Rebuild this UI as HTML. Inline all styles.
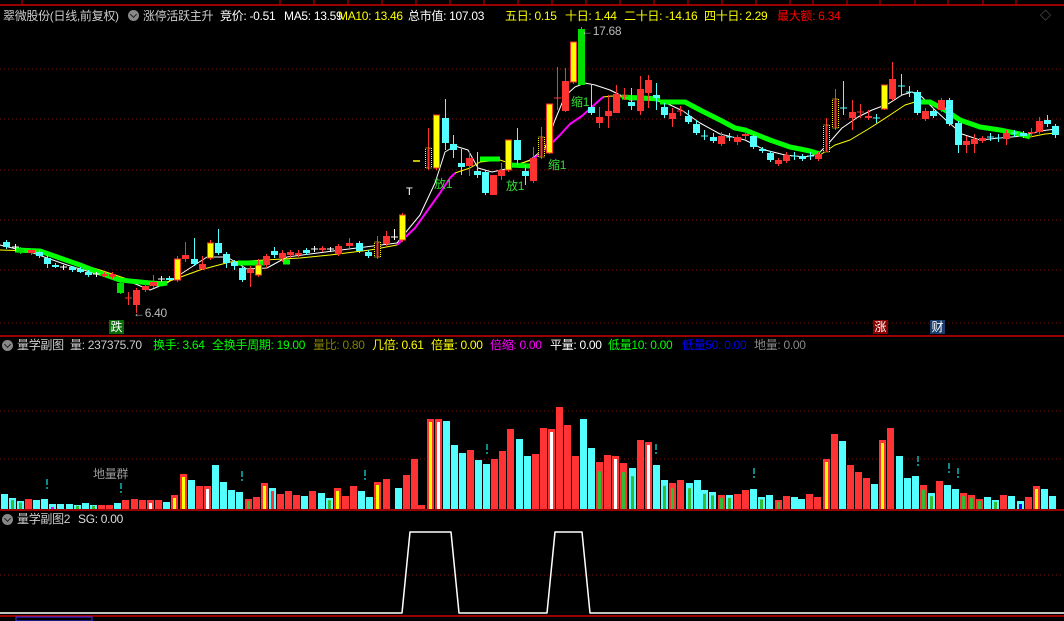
<!DOCTYPE html>
<html><head><meta charset="utf-8"><style>
html,body{margin:0;padding:0;background:#000;width:1064px;height:621px;overflow:hidden;font-family:"Liberation Sans","Noto Sans CJK SC",sans-serif}
.t{position:absolute;font-size:12px;letter-spacing:-0.3px;white-space:nowrap;line-height:14px}
.ic{position:absolute;width:11px;height:11px;border-radius:50%;background:#888}
.ic:after{content:"";position:absolute;left:3px;top:2px;width:4px;height:4px;border-right:1.5px solid #222;border-bottom:1.5px solid #222;transform:rotate(45deg)}
.lb{position:absolute;font-size:12px;line-height:14px;width:15px;height:14px;text-align:center}
</style></head><body>
<svg id="s" width="1064" height="621" style="position:absolute;left:0;top:0"></svg>
<div class="t" style="left:3px;top:9px;color:#ccc">翠微股份(日线,前复权)</div>
<div class="ic" style="left:128px;top:10px"></div>
<div class="t" style="left:143px;top:9px;color:#ccc">涨停活跃主升</div>
<div class="t" style="left:220px;top:9px;color:#fff">竞价: -0.51</div>
<div class="t" style="left:284px;top:9px;color:#fff">MA5: 13.59</div>
<div class="t" style="left:338px;top:9px;color:#ff0">MA10: 13.46</div>
<div class="t" style="left:408px;top:9px;color:#fff">总市值: 107.03</div>
<div class="t" style="left:505px;top:9px;color:#ff0">五日: 0.15</div>
<div class="t" style="left:565px;top:9px;color:#ff0">十日: 1.44</div>
<div class="t" style="left:624px;top:9px;color:#ff0">二十日: -14.16</div>
<div class="t" style="left:704px;top:9px;color:#ff0">四十日: 2.29</div>
<div class="t" style="left:777px;top:9px;color:#f00">最大额: 6.34</div>
<div class="t" style="left:1040px;top:9px;color:#777;font-size:11px">◇</div>

<div class="ic" style="left:2px;top:340px"></div>
<div class="t" style="left:17px;top:338px;color:#ccc">量学副图</div>
<div class="t" style="left:70px;top:338px;color:#ccc">量: 237375.70</div>
<div class="t" style="left:153px;top:338px;color:#0f0">换手: 3.64</div>
<div class="t" style="left:212px;top:338px;color:#0f0">全换手周期: 19.00</div>
<div class="t" style="left:313px;top:338px;color:#808000">量比: 0.80</div>
<div class="t" style="left:372px;top:338px;color:#ff0">几倍: 0.61</div>
<div class="t" style="left:431px;top:338px;color:#ff0">倍量: 0.00</div>
<div class="t" style="left:490px;top:338px;color:#f0f">倍缩: 0.00</div>
<div class="t" style="left:550px;top:338px;color:#fff">平量: 0.00</div>
<div class="t" style="left:608px;top:338px;color:#0f0">低量10: 0.00</div>
<div class="t" style="left:682px;top:338px;color:#00f">低量50: 0.00</div>
<div class="t" style="left:754px;top:338px;color:#888">地量: 0.00</div>

<div class="ic" style="left:2px;top:514px"></div>
<div class="t" style="left:17px;top:512px;color:#ccc">量学副图2</div>
<div class="t" style="left:78px;top:512px;color:#ddd">SG: 0.00</div>

<div class="t" style="left:93px;top:467px;color:#999">地量群</div>
<div class="lb" style="left:109px;top:320px;background:#0a6b0a;color:#fff">跌</div>
<div class="lb" style="left:873px;top:320px;background:#8b0000;color:#fff">涨</div>
<div class="lb" style="left:930px;top:320px;background:#1a3d6b;color:#fff">财</div>
<div class="t" style="left:133px;top:306px;color:#bbb">←6.40</div>
<div class="t" style="left:581px;top:24px;color:#bbb">←17.68</div>
<div class="t" style="left:434px;top:177px;color:#3d3">放1</div>
<div class="t" style="left:506px;top:179px;color:#3d3">放1</div>
<div class="t" style="left:571px;top:95px;color:#3d3">缩1</div>
<div class="t" style="left:548px;top:158px;color:#3d3">缩1</div>
<div class="t" style="left:406px;top:185px;color:#fff;font-size:11px">T</div>
<script>
var s=document.getElementById('s'),h='';
function L(x1,y1,x2,y2,c,w,d){h+='<line x1="'+x1+'" y1="'+y1+'" x2="'+x2+'" y2="'+y2+'" stroke="'+c+'" stroke-width="'+(w||1)+'"'+(d?' stroke-dasharray="'+d+'"':'')+'/>';}
function R(x,y,w,hh,f,st){h+='<rect x="'+x+'" y="'+y+'" width="'+w+'" height="'+hh+'" fill="'+f+'"'+(st?' stroke="'+st+'"':'')+'/>';}
function P(pts,c,w){h+='<polyline fill="none" stroke="'+c+'" stroke-width="'+w+'" stroke-linejoin="round" points="'+pts.map(function(p){return p.join(',')}).join(' ')+'"/>';}
L(0,5,1064,5,'#c00',1.5);L(22,0,22,5,'#c00');
[280,314,348,382,416,450,484,518,552,586,620,654,688,722,756,790,813,847,880,915,948,983,1016].forEach(function(x){L(x,0,x,5,'#c00')});
[69,119,170,220,270,323].forEach(function(y){L(0,y,1064,y,'#7a1010',1,'1 3')});
[411,459].forEach(function(y){L(0,y,1064,y,'#7a1010',1,'1 3')});
L(0,575,1064,575,'#7a1010',1,'1 3');
L(0,336,1064,336,'#c00',1.5);L(0,510,1064,510,'#c00',1.5);L(0,616,1064,616,'#c00',1.5);
var C=[[3,242,247,240,249,'c'],[12,247,248,244,251,'p'],[17,249,252,247,254,'g'],[28,250,253,248,255,'r'],[36,252,256,250,258,'c'],[44,258,264,255,268,'c'],[52,265,267,263,268,'c'],[60,267,268,265,270,'p'],[69,267,270,266,272,'c'],[77,269,272,267,273,'c'],[85,272,275,270,277,'c'],[93,274,275,272,277,'p'],[101,274,276,272,277,'r'],[109,274,277,272,279,'r'],[117,283,293,282,294,'g'],[125,298,299,292,305,'q'],[133,290,305,288,313,'r'],[142,286,290,283,292,'r'],[150,282,286,275,288,'r'],[158,279,280,276,282,'p'],[166,278,280,276,282,'c'],[174,259,280,256,282,'y'],[182,255,259,242,262,'r'],[191,259,264,238,266,'c'],[199,264,269,256,270,'r'],[207,243,258,240,260,'y'],[215,243,253,229,255,'c'],[223,254,263,252,268,'c'],[231,262,266,260,270,'c'],[239,268,280,267,282,'c'],[247,269,273,266,287,'r'],[255,265,275,259,277,'y'],[263,256,265,254,268,'r'],[271,251,255,247,258,'c'],[279,253,258,250,262,'r'],[287,252,255,250,258,'r'],[295,253,255,250,257,'r'],[303,250,253,248,255,'c'],[311,249,250,246,252,'p'],[319,248,250,246,252,'r'],[327,249,250,247,252,'p'],[335,246,254,244,256,'r'],[346,243,246,238,248,'r'],[356,243,251,241,253,'c'],[365,252,256,250,258,'c'],[374,242,257,236,259,'d'],[383,236,244,231,246,'r'],[391,237,239,229,240,'p'],[399,215,240,213,242,'y'],
[416,161,162,161,162,'yd'],[425,148,168,128,170,'d'],[433,115,168,115,170,'y'],[442,118,143,99,150,'c'],[450,144,150,135,158,'c'],[458,163,167,149,175,'c'],[466,158,166,152,176,'r'],[474,171,175,152,178,'c'],[482,172,193,170,195,'c'],[490,175,195,175,195,'r'],[498,170,176,163,180,'r'],[505,140,170,140,172,'y'],[514,140,160,128,165,'c'],[522,171,176,165,185,'c'],[530,158,181,147,183,'r'],[538,137,157,127,159,'d'],[546,104,153,104,154,'y'],[554,98,99,67,110,'q'],[562,81,111,68,112,'r'],[570,42,82,42,84,'y'],[578,29,85,27,85,'g'],[588,107,113,84,115,'c'],[596,117,123,107,128,'r'],[605,111,116,95,128,'r'],[613,94,113,85,113,'r'],[621,96,97,88,100,'q'],[628,102,106,88,110,'c'],[637,89,111,76,115,'r'],[645,80,93,75,108,'r'],[653,95,98,83,110,'c'],[661,107,115,103,118,'c'],[669,113,119,108,127,'r'],[677,111,112,106,116,'q'],[685,116,122,110,124,'c'],[693,124,133,120,135,'c'],[701,136,137,130,140,'o'],[710,137,141,133,143,'c'],[718,136,144,132,146,'r'],[726,137,138,133,141,'o'],[734,137,142,135,145,'r'],[742,134,136,131,140,'r'],[750,136,147,134,149,'c'],[759,149,151,147,153,'c'],[767,153,160,151,162,'c'],[775,160,164,158,166,'r'],[783,155,161,152,163,'r'],[791,156,157,152,160,'o'],[799,156,159,154,161,'c'],[807,156,157,152,160,'o'],[815,154,159,152,161,'r'],[823,125,152,118,152,'d'],[832,99,128,89,130,'d'],[840,108,109,81,115,'o'],[849,112,118,100,130,'r'],[857,112,113,104,118,'q'],[865,116,118,110,120,'r'],[873,118,119,114,123,'o'],[881,85,109,85,110,'y'],[889,79,99,62,101,'r'],[898,86,87,74,95,'o'],[906,92,93,86,97,'o'],[914,92,113,90,115,'c'],[922,111,119,108,121,'r'],[930,111,116,108,118,'c'],[938,100,110,98,112,'r'],[946,100,124,98,126,'c'],[955,123,145,121,153,'c'],[963,141,145,136,153,'r'],[971,139,144,134,153,'r'],[979,138,141,136,143,'r'],[987,137,138,133,141,'o'],[995,138,139,134,142,'o'],[1003,133,139,130,145,'r'],[1011,133,134,130,137,'o'],[1020,133,136,131,138,'c'],[1028,132,133,128,137,'r'],[1036,121,132,117,134,'r'],[1044,120,124,115,127,'c'],[1052,126,135,124,138,'c']];
P([[0,245],[33,253],[67,265],[100,275],[133,283],[150,290],[167,283],[187,270],[207,257],[227,257],[247,269],[267,268],[287,257],[333,251],[397,243],[420,215],[435,183],[445,152],[455,146],[468,150],[478,168],[492,172],[510,168],[530,160],[545,148],[555,120],[565,96],[575,87],[585,83],[595,85],[610,90],[630,100],[650,99],[668,104],[683,111],[700,123],[720,134],[745,140],[765,150],[785,155],[805,157],[818,154],[828,144],[842,128],[858,117],[872,110],[888,104],[902,95],[912,92],[922,97],[935,110],[947,121],[962,134],[980,140],[1000,138],[1022,136],[1040,131],[1056,129]],'#fff',1);
P([[0,250],[33,251],[60,258],[100,270],[130,280],[167,282],[200,270],[230,262],[300,258],[330,255],[370,250],[397,245]],'#ff0',1);
P([[397,245],[415,228],[430,207],[440,193],[450,178],[455,173]],'#f0f',2);
P([[455,173],[470,168],[480,162],[500,160],[515,165],[532,160]],'#ff0',1);
P([[532,160],[548,147],[560,135],[570,124],[582,116],[603,97]],'#f0f',2);
P([[603,97],[612,96],[622,97]],'#ff0',1);
P([[820,155],[835,145],[850,140],[870,128],[890,115],[905,105],[915,102]],'#ff0',1);
P([[1030,137],[1045,134],[1056,133]],'#ff0',1);
var G=[[[15,250],[40,251],[60,258],[80,265],[100,273],[120,280],[140,282],[160,284],[167,283]],[[238,263],[265,263]],[[283,262],[290,262]],[[480,159],[500,159]],[[510,165],[530,166]],[[622,97],[660,99]],[[660,102],[685,102],[700,110],[720,120],[735,128],[745,130],[770,140],[790,147],[810,151],[820,154]],[[915,102],[930,102],[945,110],[960,120],[980,127],[1000,130],[1020,134],[1030,137]]];
G.forEach(function(g){P(g,'#0f0',5)});
C.forEach(function(c){var x=c[0],t=c[1],b=c[2],hi=c[3],lo=c[4],k=c[5],w=7,cx=x+3.5;
 var col={r:'#ff3232',c:'#54ffff',g:'#00e000',y:'#ff3232',d:'#ff3232',p:'#fff',q:'#ff3232',o:'#54ffff',yd:'#ff0'}[k];
 if(k=='yd'){L(x-3,t,x+4,t,'#ff0',1.5);return;}
 L(cx,hi,cx,lo,col,1);
 if(k=='p'||k=='q'||k=='o'){L(x,t,x+w,t,col,1);return;}
 if(k=='y'){R(x+.5,t,w-1,Math.max(b-t,1),'#ff0','#ff3232');return;}
 if(k=='d'){h+='<rect x="'+(x+.5)+'" y="'+t+'" width="'+(w-1)+'" height="'+(b-t)+'" fill="#000" stroke="#ff0" stroke-dasharray="1 1"/>';L(cx,t,cx,b,'#ff3232',2);return;}
 R(x,t,w,Math.max(b-t,1.5),col);
});
var V=[[1,15,'c'],[9,11,'cg'],[17,8,'cg'],[25,10,'r'],[33,9,'c'],[41,10,'c'],[49,5,'cm'],[57,5,'c'],[66,5,'c'],[74,4,'cg'],[82,6,'c'],[90,4,'cg'],[98,4,'r'],[106,4,'r'],[114,6,'c'],[122,9,'r'],[131,10,'r'],[139,9,'r'],[147,9,'rw'],[155,9,'r'],[163,7,'c'],[171,14,'ry'],[180,35,'ry'],[188,29,'c'],[196,23,'r'],[204,23,'rw'],[212,44,'c'],[220,27,'c'],[228,19,'c'],[236,17,'c'],[245,10,'rg'],[253,12,'r'],[261,26,'ry'],[269,21,'cr'],[277,15,'r'],[285,18,'r'],[293,14,'r'],[301,13,'c'],[309,18,'r'],[318,16,'c'],[326,11,'cg'],[334,21,'ry'],[342,13,'r'],[350,23,'r'],[358,18,'c'],[366,12,'c'],[374,27,'ry'],[383,30,'r'],[395,21,'c'],[403,34,'r'],[411,50,'r'],[418,4,'r'],[427,90,'ry'],[435,90,'rw'],[443,88,'c'],[451,64,'c'],[459,56,'c'],[467,59,'r'],[475,49,'c'],[483,45,'c'],[491,50,'r'],[499,58,'r'],[507,80,'r'],[516,70,'c'],[524,53,'c'],[532,55,'r'],[540,81,'r'],[548,80,'rw'],[556,102,'r'],[564,84,'r'],[572,53,'r'],[580,90,'c'],[588,61,'c'],[596,47,'rg'],[604,54,'r'],[612,53,'rw'],[620,46,'rg'],[629,41,'cg'],[637,69,'r'],[645,67,'rw'],[653,44,'c'],[661,29,'cg'],[669,26,'rg'],[677,29,'r'],[686,26,'cg'],[694,29,'c'],[701,19,'cg'],[709,17,'cg'],[718,14,'rg'],[726,14,'cg'],[734,15,'r'],[742,19,'r'],[750,20,'c'],[758,12,'cg'],[766,14,'c'],[775,9,'rg'],[783,13,'r'],[791,12,'c'],[798,10,'c'],[806,15,'r'],[814,12,'r'],[823,50,'ry'],[831,75,'r'],[839,68,'c'],[847,44,'r'],[855,37,'r'],[863,31,'r'],[871,25,'c'],[879,69,'ry'],[887,81,'r'],[896,53,'c'],[904,31,'c'],[912,33,'c'],[920,24,'rg'],[928,16,'cg'],[936,28,'r'],[944,24,'c'],[952,20,'c'],[960,16,'rg'],[968,14,'rg'],[976,10,'rg'],[984,12,'c'],[992,9,'cg'],[1000,14,'r'],[1008,13,'c'],[1017,8,'cb'],[1025,12,'r'],[1033,23,'ry'],[1041,20,'c'],[1049,13,'c']];
V.forEach(function(v){var x=v[0],hh=v[1],k=v[2],y=509-hh;
 R(x,y,7,hh,k[0]=='r'?'#ff3333':'#54ffff');
 if(k.length>1){var ic={g:'#33bb33',y:'#ff0',w:'#fff',m:'#f0f',r:'#ff3333',b:'#00f'}[k[1]];var ih=k[1]=='g'?hh*0.8:hh-3;R(x+2,509-ih,3,ih,ic);}
});
[[46,479],[120,483],[241,471],[364,470],[486,444],[655,444],[753,468],[917,456],[948,463],[957,468]].forEach(function(e){R(e[0],e[1],2,6,'#0a8a8a');R(e[0],e[1]+8,2,2,'#0a8a8a');});
P([[0,613],[402,613],[410,532],[451,532],[459,613],[547,613],[555,532],[582,532],[590,613],[1064,613]],'#fff',1.5);
R(16,617,76,4,'#000','#33f');
s.innerHTML=h;
</script>
</body></html>
